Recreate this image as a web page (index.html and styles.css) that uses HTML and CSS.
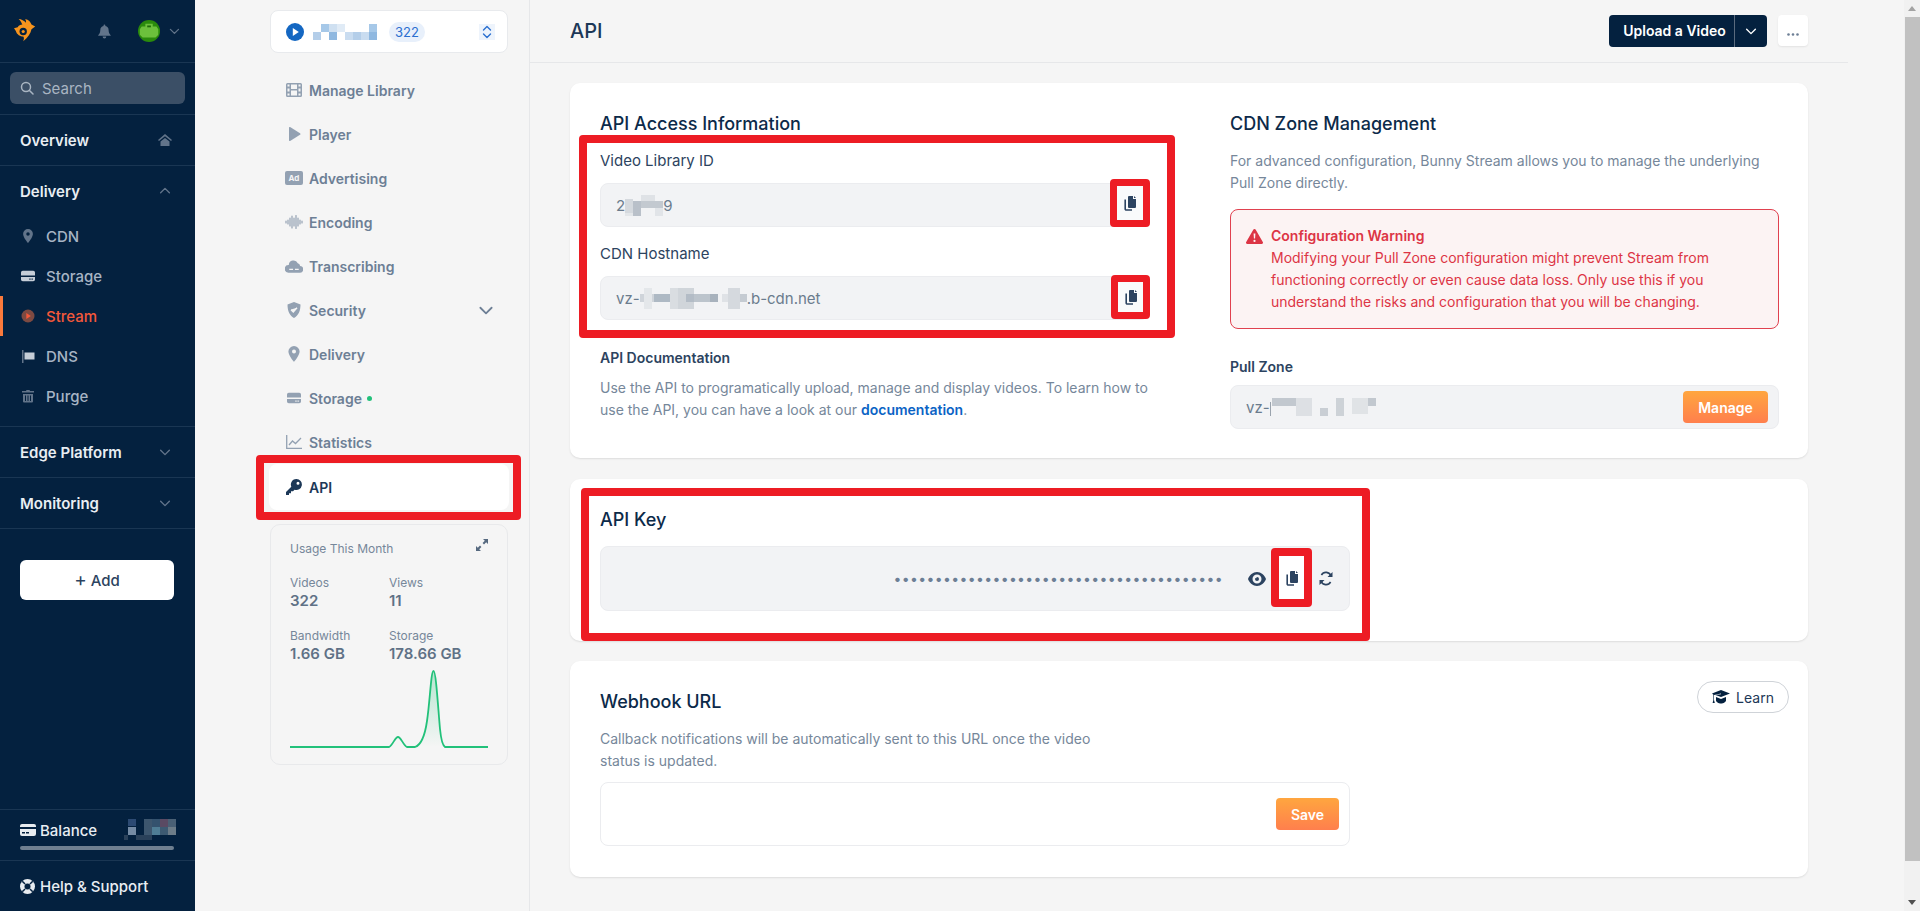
FILE: index.html
```html
<!DOCTYPE html>
<html lang="en">
<head>
    <meta charset="UTF-8">
    <meta name="viewport" content="width=device-width, initial-scale=1.0">
    <title>API</title>
    <link rel="stylesheet" href="styles.css">
</head>
<body>
    <svg class="sprite" aria-hidden="true">
        <symbol id="i-copy" viewBox="0 0 16 16">
            <path d="M7 1h4v3h3v8a1 1 0 0 1-1 1H7a1 1 0 0 1-1-1V2a1 1 0 0 1 1-1zM12 1l2 2h-2z" fill="currentColor"/>
            <path d="M3.2 4.5V14a1 1 0 0 0 1 1H10" fill="none" stroke="currentColor" stroke-width="1.6"/>
        </symbol>
        <symbol id="i-down" viewBox="0 0 16 16">
            <path d="M3 6l5 5 5-5" fill="none" stroke="currentColor" stroke-width="1.6" stroke-linecap="round" stroke-linejoin="round"/>
        </symbol>
        <symbol id="i-up" viewBox="0 0 16 16">
            <path d="M3 10l5-5 5 5" fill="none" stroke="currentColor" stroke-width="1.6" stroke-linecap="round" stroke-linejoin="round"/>
        </symbol>
        <symbol id="i-pin" viewBox="0 0 16 16">
            <path d="M8 0a5.6 5.6 0 0 0-5.6 5.6C2.400 9.500 8 16 8 16s5.600-6.500 5.600-10.400A5.600 5.600 0 0 0 8 0zm0 7.600a2 2 0 1 1 0-4 2 2 0 0 1 0 4z" fill="currentColor"/>
        </symbol>
        <symbol id="i-drive" viewBox="0 0 16 16">
            <path d="M2 2h12a2 2 0 0 1 2 2v3.500H0V4a2 2 0 0 1 2-2zM0 9h16v3a2 2 0 0 1-2 2H2a2 2 0 0 1-2-2zm9.500 1.800v1.400h1.500v-1.400zm2.500 0v1.400h1.500v-1.400z" fill="currentColor" fill-rule="evenodd"/>
        </symbol>
    </svg>

    <div class="app">
        <aside class="sidebar">
            <div class="side-top">
                <svg class="logo" width="24" height="28" viewBox="0 0 24 28">
                    <path d="M9 7C8 4 6 2 5 1c3 0 6 2 8 4 0-2 0-3-1-4 4 1 6 3 7 6l4 2-4 3c-1 5-4 9-9 13 1-2 1-4 0-5-3 0-7-2-8-6L0 11l4-1c1-2 3-3 5-3z" fill="#f7941d"/>
                    <circle cx="10" cy="14.500" r="4" fill="#04213f"/>
                    <circle cx="10" cy="14.500" r="1.700" fill="#f7941d"/>
                </svg>
                <svg class="bell" width="14" height="15" viewBox="0 0 14 15">
                    <path d="M7 0a1 1 0 0 1 1 1v.6A4.500 4.500 0 0 1 11.500 6c0 3.500 1.500 4.500 2.500 6H0c1-1.500 2.500-2.500 2.500-6A4.500 4.500 0 0 1 6 1.600V1a1 1 0 0 1 1-1zM5 13h4a2 2 0 0 1-4 0z" fill="#62748a"/>
                </svg>
                <svg class="avatar" width="24" height="24" viewBox="0 0 24 24">
                    <circle cx="12" cy="12" r="12" fill="#2a8a0c"/>
                    <path d="M8 4h8v3h4l2 3v6l-3 3H5l-3-3v-6l2-3h4z" fill="#6cc03c"/>
                    <rect x="10" y="6" width="4" height="2" fill="#1f6c08"/>
                </svg>
                <svg class="top-chev" width="14" height="14"><use href="#i-down"/></svg>
            </div>

            <div class="search-wrap">
                <div class="search">
                    <svg width="14" height="14" viewBox="0 0 14 14"><circle cx="6" cy="6" r="4.500" fill="none" stroke="currentColor" stroke-width="1.500"/><path d="M9.500 9.500L13 13" stroke="currentColor" stroke-width="1.500" stroke-linecap="round"/></svg>
                    <span>Search</span>
                </div>
            </div>

            <div class="side-head side-single">
                <span>Overview</span>
                <svg width="14" height="14" viewBox="0 0 14 14"><path d="M7 1l7 6-1 1-6-4.800L1 8 0 7zM2.500 8.500L7 5l4.500 3.500V13h-9z" fill="#62748a"/></svg>
            </div>

            <div class="side-group">
                <div class="side-head">
                    <span>Delivery</span>
                    <svg class="chev" width="14" height="14"><use href="#i-up"/></svg>
                </div>
                <a class="side-link"><svg width="14" height="14"><use href="#i-pin"/></svg>CDN</a>
                <a class="side-link"><svg class="light" width="14" height="14"><use href="#i-drive"/></svg>Storage</a>
                <a class="side-link active">
                    <svg width="14" height="14" viewBox="0 0 14 14"><circle cx="7" cy="7" r="6.500" fill="#7d4a42"/><path d="M5.300 4l4.500 3-4.500 3z" fill="#f4583a"/></svg>Stream
                </a>
                <a class="side-link">
                    <svg width="14" height="14" viewBox="0 0 14 14"><rect x="1" y="1" width="1.500" height="13" fill="#62748a"/><rect x="3.500" y="3.500" width="10" height="7" fill="#c6ceD8"/></svg>DNS
                </a>
                <a class="side-link">
                    <svg width="14" height="14" viewBox="0 0 14 14"><path d="M1 2h4l.5-1h3L9 2h4v1.500H1zM2 5h10v7.500a1 1 0 0 1-1 1H3a1 1 0 0 1-1-1zm2 1.500V12h1V6.500zm2.500 0V12h1V6.500zm2.500 0V12h1V6.500z" fill="#62748a" fill-rule="evenodd"/></svg>Purge
                </a>
            </div>

            <div class="side-head side-single">
                <span>Edge Platform</span>
                <svg class="chev" width="14" height="14"><use href="#i-down"/></svg>
            </div>
            <div class="side-head side-single">
                <span>Monitoring</span>
                <svg class="chev" width="14" height="14"><use href="#i-down"/></svg>
            </div>

            <div class="add-wrap">
                <button class="add-btn"><span class="plus">+</span> Add</button>
            </div>

            <div class="side-bottom">
                <div class="balance">
                    <div class="balance-row">
                        <svg width="16" height="14" viewBox="0 0 16 14"><path d="M2 1h12a2 2 0 0 1 2 2v1H0V3a2 2 0 0 1 2-2zM0 6h16v5a2 2 0 0 1-2 2H2a2 2 0 0 1-2-2zm2 3v1.500h3V9zm4 0v1.500h3V9z" fill="#e8ecf0" fill-rule="evenodd"/></svg>
                        <span>Balance</span>
                        <svg class="pix" width="52" height="22" viewBox="0 0 52 22">
                            <rect x="4" y="0" width="8" height="7" fill="#2c4a73"/>
                            <rect x="4" y="8" width="8" height="8" fill="#758ba4"/>
                            <rect x="0" y="16" width="4" height="5" fill="#2a415a"/>
                            <rect x="12" y="16" width="16" height="5" fill="#2a415a"/>
                            <rect x="20" y="0" width="8" height="16" fill="#3d566e"/>
                            <rect x="28" y="0" width="8" height="8" fill="#34526e"/>
                            <rect x="28" y="8" width="8" height="8" fill="#4f7d95"/>
                            <rect x="36" y="0" width="8" height="8" fill="#5a4a63"/>
                            <rect x="36" y="8" width="8" height="8" fill="#3d5a72"/>
                            <rect x="44" y="0" width="8" height="8" fill="#4a6075"/>
                            <rect x="44" y="8" width="8" height="8" fill="#6d7c88"/>
                        </svg>
                    </div>
                    <div class="balance-bar"></div>
                </div>
                <div class="help">
                    <svg width="15" height="15" viewBox="0 0 16 16"><circle cx="8" cy="8" r="8" fill="#e8ecf0"/><circle cx="8" cy="8" r="3.200" fill="#04213f"/><path d="M2.400 2.400l3 3M13.600 2.400l-3 3M2.400 13.600l3-3M13.600 13.600l-3-3" stroke="#04213f" stroke-width="1.600"/></svg>
                    <span>Help &amp; Support</span>
                </div>
            </div>
        </aside>

        <nav class="subnav">
            <div class="selector">
                <svg width="18" height="18" viewBox="0 0 18 18"><circle cx="9" cy="9" r="9" fill="#1467c2"/><path d="M6.800 5l6 4-6 4z" fill="#fff"/></svg>
                <svg class="pix" width="64" height="16" viewBox="0 0 64 16">
                    <rect x="0" y="8" width="8" height="8" fill="#b4cee9"/>
                    <rect x="8" y="0" width="8" height="8" fill="#a6c8e8"/>
                    <rect x="16" y="0" width="8" height="8" fill="#cfe0f1"/>
                    <rect x="16" y="8" width="8" height="8" fill="#8fb8e0"/>
                    <rect x="24" y="0" width="8" height="8" fill="#e0ebf6"/>
                    <rect x="32" y="8" width="8" height="8" fill="#c9dcf0"/>
                    <rect x="40" y="8" width="8" height="8" fill="#b4cee9"/>
                    <rect x="48" y="8" width="8" height="8" fill="#c9dcf0"/>
                    <rect x="56" y="0" width="8" height="8" fill="#a6c8e8"/>
                    <rect x="56" y="8" width="8" height="8" fill="#8fb8e0"/>
                </svg>
                <span class="badge">322</span>
                <span class="updown">
                    <svg width="12" height="14" viewBox="0 0 12 14"><path d="M2.500 5L6 1.500 9.500 5M2.500 9L6 12.500 9.500 9" fill="none" stroke="#2b6fd0" stroke-width="1.400" stroke-linecap="round" stroke-linejoin="round"/></svg>
                </span>
            </div>

            <div class="nav-list">
                <a class="nav-item">
                    <svg width="16" height="14" viewBox="0 0 16 14"><path d="M1.500 0h13A1.500 1.500 0 0 1 16 1.500v11a1.500 1.500 0 0 1-1.500 1.500h-13A1.500 1.500 0 0 1 0 12.500v-11A1.500 1.500 0 0 1 1.500 0zM1.500 1.500v2h2v-2zm0 4v3h2v-3zm0 5v2h2v-2zm11-9v2h2v-2zm0 4v3h2v-3zm0 5v2h2v-2zM5 1.500v4.500h6V1.500zm0 6v5h6v-5z" fill="currentColor" fill-rule="evenodd"/></svg>
                    Manage Library
                </a>
                <a class="nav-item">
                    <svg width="16" height="14" viewBox="0 0 16 14"><path d="M3 1a1 1 0 0 1 1.500-.8l9.500 6a1 1 0 0 1 0 1.600l-9.500 6A1 1 0 0 1 3 13z" fill="currentColor"/></svg>
                    Player
                </a>
                <a class="nav-item">
                    <span class="ad-icon">Ad</span>
                    Advertising
                </a>
                <a class="nav-item">
                    <svg width="18" height="14" viewBox="0 0 18 14"><path d="M1 6v2M3 5v4M5 3v8M7 1v12M9 3v8M11 0.500v13M13 3v8M15 5v4M17 6v2" stroke="currentColor" stroke-width="1.200" stroke-linecap="round"/></svg>
                    Encoding
                </a>
                <a class="nav-item">
                    <svg width="19" height="14" viewBox="0 0 19 14"><path d="M4 6a5 5 0 0 1 9.500-2A3.500 3.500 0 0 1 16 7a3.500 3.500 0 0 1-.500 7h-12A3.500 3.500 0 0 1 4 6zm.500 4v1.200h4V10zm6 0v1.200h4V10z" fill="currentColor" fill-rule="evenodd"/></svg>
                    Transcribing
                </a>
                <a class="nav-item">
                    <svg width="16" height="16" viewBox="0 0 16 16"><path d="M8 0l6.500 2.500C14.500 9 12.500 13.500 8 16 3.500 13.500 1.500 9 1.500 2.500zM5 7.500L7.300 10 11 5.800" fill="currentColor"/><path d="M5 7.800L7.300 10 11 5.800" fill="none" stroke="#f5f5f5" stroke-width="1.400"/></svg>
                    Security
                    <svg class="nav-chev" width="18" height="18"><use href="#i-down"/></svg>
                </a>
                <a class="nav-item">
                    <svg width="16" height="16"><use href="#i-pin"/></svg>
                    Delivery
                </a>
                <a class="nav-item">
                    <svg width="16" height="14"><use href="#i-drive"/></svg>
                    Storage <span class="dot"></span>
                </a>
                <a class="nav-item">
                    <svg width="16" height="14" viewBox="0 0 16 14"><path d="M.7 0v13.300H16" fill="none" stroke="currentColor" stroke-width="1.300"/><path d="M3 10l3.500-4 3 2.500L15 3" fill="none" stroke="currentColor" stroke-width="1.300"/></svg>
                    Statistics
                </a>
                <a class="nav-item current">
                    <svg width="16" height="16" viewBox="0 0 16 16"><path d="M10.500 0A5.500 5.500 0 1 1 8.600 10.700L7 12.300H5v2H3V16H0v-3l5.300-5.300A5.500 5.500 0 0 1 10.500 0zm1.500 2.700a1.500 1.500 0 1 0 0 3 1.500 1.500 0 0 0 0-3z" fill="currentColor" fill-rule="evenodd"/></svg>
                    API
                    <span class="mark mark-nav"></span>
                </a>
            </div>

            <div class="usage">
                <div class="usage-title">
                    <span>Usage This Month</span>
                    <svg width="12" height="12" viewBox="0 0 12 12"><path d="M7 0h5v5l-1.800-1.800L8 5.400 6.600 4 8.800 1.800zM0 7l1.800 1.800L4 6.600 5.400 8 3.200 10.200 5 12H0z" fill="#56697f"/></svg>
                </div>
                <div class="usage-grid">
                    <div><p class="u-label">Videos</p><p class="u-value">322</p></div>
                    <div><p class="u-label">Views</p><p class="u-value">11</p></div>
                    <div><p class="u-label">Bandwidth</p><p class="u-value">1.66 GB</p></div>
                    <div><p class="u-label">Storage</p><p class="u-value">178.66 GB</p></div>
                </div>
                <svg class="usage-chart" width="198" height="82" viewBox="0 0 198 82">
                    <defs>
                        <linearGradient id="spark" x1="0" y1="0" x2="0" y2="1">
                            <stop offset="0" stop-color="#22c17a" stop-opacity=".3"/>
                            <stop offset="1" stop-color="#22c17a" stop-opacity="0"/>
                        </linearGradient>
                    </defs>
                    <path d="M127 80C133 76 136 66 138 50C140 30 141 4 143.500 4C146 4 148 40 150 62C151 72 152 78 155 80Z" fill="url(#spark)"/>
                    <path d="M0 80H99C103 78 105 70 108 70C111 70 113 78 117 80H125C131 78 135 68 137 54C140 34 141 4 143.500 4C146 4 148 40 150 62C151 72 152 78 155 80H198" fill="none" stroke="#22c17a" stroke-width="1.800"/>
                </svg>
            </div>
        </nav>

        <main class="main">
            <header class="page-head">
                <h1>API</h1>
                <div class="head-actions">
                    <div class="upload">
                        <span class="upload-label">Upload a Video</span>
                        <span class="upload-caret"><svg width="14" height="14"><use href="#i-down"/></svg></span>
                    </div>
                    <button class="more-btn">
                        <svg width="12" height="3" viewBox="0 0 12 3"><circle cx="1.500" cy="1.500" r="1.300"/><circle cx="6" cy="1.500" r="1.300"/><circle cx="10.500" cy="1.500" r="1.300"/></svg>
                    </button>
                </div>
            </header>

            <div class="content">
                <section class="card card-access">
                    <div class="col">
                        <h2>API Access Information</h2>
                        <div class="access-fields">
                            <label class="label">Video Library ID</label>
                            <div class="field">
                                <span>2</span>
                                <svg class="pix" width="38" height="21" viewBox="0 0 38 21">
                                    <rect x="0" y="4" width="8" height="14" fill="#d5d9de"/>
                                    <rect x="0" y="18" width="8" height="3" fill="#e3e6e9"/>
                                    <rect x="8" y="6" width="8" height="15" fill="#b9c0c9"/>
                                    <rect x="16" y="0" width="14" height="6" fill="#dfe2e6"/>
                                    <rect x="16" y="6" width="22" height="7" fill="#c3c9d0"/>
                                    <rect x="30" y="13" width="8" height="8" fill="#e1e4e8"/>
                                </svg>
                                <span>9</span>
                                <span class="copy-mark copy-a"><svg width="16" height="18"><use href="#i-copy"/></svg></span>
                            </div>
                            <label class="label label-next">CDN Hostname</label>
                            <div class="field">
                                <span>vz-</span>
                                <svg class="pix" width="107" height="21" viewBox="0 0 107 21">
                                    <rect x="0" y="6" width="30" height="8" fill="#cfd4da"/>
                                    <rect x="4" y="0" width="8" height="21" fill="#e4e7ea"/>
                                    <rect x="14" y="6" width="16" height="8" fill="#aeb9c4"/>
                                    <rect x="30" y="0" width="8" height="21" fill="#d9dde1"/>
                                    <rect x="38" y="0" width="16" height="21" fill="#d0d5da"/>
                                    <rect x="46" y="6" width="8" height="8" fill="#b3bcc6"/>
                                    <rect x="54" y="6" width="16" height="8" fill="#bcc4cc"/>
                                    <rect x="70" y="6" width="8" height="8" fill="#a8b2bd"/>
                                    <rect x="82" y="6" width="18" height="8" fill="#dfe2e6"/>
                                    <rect x="88" y="0" width="12" height="21" fill="#d5d9de"/>
                                    <rect x="100" y="6" width="7" height="8" fill="#c5cbd2"/>
                                </svg>
                                <span>.b-cdn.net</span>
                                <span class="copy-mark copy-b"><svg width="16" height="18"><use href="#i-copy"/></svg></span>
                            </div>
                            <span class="mark mark-access"></span>
                        </div>
                        <h3 class="doc-title">API Documentation</h3>
                        <p class="text doc-text">Use the API to programatically upload, manage and display videos. To learn how to use the API, you can have a look at our <a class="doc-link">documentation</a>.</p>
                    </div>
                    <div class="col">
                        <h2>CDN Zone Management</h2>
                        <p class="text zone-text">For advanced configuration, Bunny Stream allows you to manage the underlying Pull Zone directly.</p>
                        <div class="warning">
                            <svg width="17" height="15" viewBox="0 0 17 15"><path d="M8.500 0a1.300 1.300 0 0 1 1.100.6l7.200 12.400a1.300 1.300 0 0 1-1.100 2H1.300a1.300 1.300 0 0 1-1.100-2L7.400.6A1.300 1.300 0 0 1 8.500 0zM7.600 4.500l.3 5h1.200l.3-5zm.9 6.300a1.100 1.100 0 1 0 0 2.200 1.100 1.100 0 0 0 0-2.200z" fill="#dc3545" fill-rule="evenodd"/></svg>
                            <div>
                                <strong>Configuration Warning</strong>
                                <p>Modifying your Pull Zone configuration might prevent Stream from functioning correctly or even cause data loss. Only use this if you understand the risks and configuration that you will be changing.</p>
                            </div>
                        </div>
                        <h3 class="pull-title">Pull Zone</h3>
                        <div class="field field-pull">
                            <span>vz-</span>
                            <svg class="pix" width="106" height="18" viewBox="0 0 106 18">
                                <rect x="0" y="4" width="1" height="14" fill="#9aa3ad"/>
                                <rect x="2" y="0" width="24" height="8" fill="#c2c8cf"/>
                                <rect x="26" y="0" width="16" height="18" fill="#dde0e4"/>
                                <rect x="50" y="10" width="8" height="8" fill="#c9ced4"/>
                                <rect x="66" y="0" width="8" height="18" fill="#cdd2d7"/>
                                <rect x="82" y="0" width="16" height="16" fill="#e0e3e6"/>
                                <rect x="98" y="0" width="8" height="8" fill="#c2c8cf"/>
                            </svg>
                            <button class="orange-btn manage-btn">Manage</button>
                        </div>
                    </div>
                </section>

                <section class="card card-key">
                    <h2>API Key</h2>
                    <div class="field field-key">
                        <span class="key-dots">••••••••••••••••••••••••••••••••••••••••</span>
                        <svg class="key-icon eye" width="18" height="14" viewBox="0 0 18 14"><path d="M9 0c4 0 7.500 3 9 7-1.500 4-5 7-9 7s-7.500-3-9-7c1.500-4 5-7 9-7zm0 2.500a4.500 4.500 0 1 0 0 9 4.500 4.500 0 0 0 0-9zM9 5a2 2 0 1 1-2 2c0-.3.100-.6.200-.9.300.2.700.3 1 .1.400-.2.500-.6.400-1.100.1-.1.300-.1.400-.1z" fill="currentColor" fill-rule="evenodd"/></svg>
                        <span class="copy-mark copy-c"><svg width="16" height="18"><use href="#i-copy"/></svg></span>
                        <svg class="key-icon refresh" width="14" height="15" viewBox="0 0 14 15"><path d="M12 5A5.300 5.300 0 0 0 2.400 4M2 10a5.300 5.300 0 0 0 9.600 1" fill="none" stroke="currentColor" stroke-width="1.600"/><path d="M13.500 1v5h-5zM.5 14V9h5z" fill="currentColor"/></svg>
                    </div>
                    <span class="mark mark-key"></span>
                </section>

                <section class="card card-hook">
                    <button class="learn-btn">
                        <svg width="18" height="14" viewBox="0 0 18 14"><path d="M9 0l9 3.500L9 7 3.500 5 9 4.200 9 3.500 2 5v5l.8 3H.6l.8-3V4.700L0 3.500zM4 7l5 2 5-2v3.500c0 1.500-2.500 3-5 3s-5-1.500-5-3z" fill="#04213f"/></svg>
                        Learn
                    </button>
                    <h2>Webhook URL</h2>
                    <p class="text hook-text">Callback notifications will be automatically sent to this URL once the video status is updated.</p>
                    <div class="hook-input">
                        <button class="orange-btn save-btn">Save</button>
                    </div>
                </section>
            </div>
        </main>

        <div class="scroll-gutter"></div>
        <div class="scrollbar">
            <span class="arrow-up"></span>
            <span class="thumb"></span>
            <span class="arrow-down"></span>
        </div>
    </div>
</body>
</html>
```

FILE: styles.css
```css
* {
    box-sizing: border-box;
}
html, body {
    height: 100%;
}
body {
    margin: 0;
    font-family: Inter, "Liberation Sans", sans-serif;
    font-size: 14px;
    color: #6b7c8d;
    background-color: #f5f5f5;
    overflow: hidden;
}
h1, h2, h3, p {
    margin: 0;
}
button {
    font-family: inherit;
    border: none;
    cursor: pointer;
}
.sprite {
    display: none;
}
.app {
    display: flex;
    height: 911px;
}
.pix {
    flex: none;
}

/* left dark sidebar */
.sidebar {
    width: 195px;
    flex: none;
    display: flex;
    flex-direction: column;
    background-color: #04213f;
    color: #a7b4c4;
}
.side-top {
    height: 63px;
    flex: none;
    display: flex;
    align-items: center;
    padding: 0 14px;
    border-bottom: 1px solid #1a3653;
}
.bell {
    margin-left: 62px;
}
.avatar {
    margin-left: 27px;
}
.top-chev {
    margin-left: 8px;
    color: #62748a;
}
.search-wrap {
    height: 52px;
    flex: none;
    padding: 9px 10px;
    border-bottom: 1px solid #1a3653;
}
.search {
    height: 32px;
    display: flex;
    align-items: center;
    gap: 8px;
    padding: 0 10px;
    background-color: #3b4f66;
    border-radius: 6px;
    color: #a9b5c2;
    font-size: 15px;
}
.side-head {
    display: flex;
    align-items: center;
    justify-content: space-between;
    height: 51px;
    flex: none;
    padding: 0 23px 0 20px;
    color: #e9eef3;
    font-size: 15px;
    font-weight: 600;
}
.side-single {
    border-bottom: 1px solid #1a3653;
}
.chev {
    color: #62748a;
}
.side-group {
    height: 261px;
    flex: none;
    border-bottom: 1px solid #1a3653;
}
.side-group .side-head {
    height: 50px;
}
.side-link {
    display: flex;
    align-items: center;
    gap: 11px;
    height: 40px;
    padding-left: 21px;
    color: #a7b4c4;
    font-size: 15px;
    font-weight: 500;
}
.side-link svg {
    color: #62748a;
}
.side-link svg.light {
    color: #c6ced8;
}
.side-link.active {
    color: #f4583a;
    box-shadow: inset 3px 0 0 #fb7a3c;
}
.add-wrap {
    padding: 31px 21px 0 20px;
}
.add-btn {
    width: 100%;
    height: 40px;
    background-color: #fff;
    border-radius: 6px;
    color: #2c4360;
    font-size: 15px;
    font-weight: 500;
}
.plus {
    font-size: 19px;
    font-weight: 400;
    line-height: 1;
}
.side-bottom {
    margin-top: auto;
    border-top: 1px solid #1a3653;
}
.balance {
    height: 51px;
    padding: 10px 21px 0 20px;
    border-bottom: 1px solid #1a3653;
}
.balance-row {
    display: flex;
    align-items: center;
    height: 20px;
    gap: 4px;
    color: #e9eef3;
    font-size: 15px;
    font-weight: 500;
}
.balance-row .pix {
    margin-left: auto;
    margin-right: -2px;
}
.balance-bar {
    height: 4px;
    margin-top: 6px;
    background-color: #6f7f90;
    border-radius: 2px;
}
.help {
    height: 50px;
    display: flex;
    align-items: center;
    gap: 5px;
    padding-left: 20px;
    color: #e9eef3;
    font-size: 15px;
    font-weight: 500;
}

/* second column */
.subnav {
    width: 335px;
    flex: none;
    padding: 10px 21px 0 75px;
    border-right: 1px solid #e6e7e9;
}
.selector {
    height: 43px;
    display: flex;
    align-items: center;
    padding: 0 10px 0 15px;
    background-color: #fff;
    border: 1px solid #e8eaed;
    border-radius: 8px;
}
.selector .pix {
    margin-left: 9px;
}
.badge {
    margin-left: 12px;
    padding: 0 6px;
    height: 20px;
    line-height: 20px;
    font-size: 13px;
    color: #2b6fd0;
    background-color: #e8f0fb;
    border-radius: 10px;
}
.updown {
    margin-left: auto;
    margin-right: 2px;
    width: 16px;
    height: 16px;
    display: flex;
    align-items: center;
    justify-content: center;
    background-color: #eef4fc;
}
.nav-list {
    margin-top: 15px;
}
.nav-item {
    position: relative;
    display: flex;
    align-items: center;
    gap: 6px;
    height: 44px;
    padding-left: 15px;
    color: #6d7f95;
    font-weight: 600;
}
.nav-item > svg:first-child, .ad-icon {
    width: 18px;
    flex: none;
    color: #93a1b2;
}
.ad-icon {
    height: 14px;
    line-height: 14px;
    text-align: center;
    font-size: 8px;
    font-weight: 700;
    color: #f5f5f5;
    background-color: #93a1b2;
    border-radius: 2px;
}
.nav-chev {
    margin-left: auto;
    margin-right: 13px;
    color: #6d7f95;
}
.dot {
    width: 5px;
    height: 5px;
    margin-left: -1px;
    border-radius: 50%;
    background-color: #22c17a;
}
.nav-item.current {
    height: 46px;
    margin: 0 -1px;
    padding-left: 16px;
    color: #1c3857;
    background-color: #fff;
    border-radius: 8px;
}
.nav-item.current > svg:first-child {
    color: #1c3857;
}

/* red annotation frames */
.mark {
    position: absolute;
    border: 8px solid #ed1c24;
    border-radius: 4px;
    pointer-events: none;
}
.mark-nav {
    inset: -9px -12px -10px -13px;
}
.mark-access {
    inset: -16px -26px -18px -21px;
}
.mark-key {
    left: 11px;
    top: 9px;
    bottom: 0;
    width: 789px;
}
.copy-mark {
    position: absolute;
    display: flex;
    align-items: center;
    justify-content: center;
    background-color: #f9fafb;
    border: 7px solid #ed1c24;
    border-radius: 4px;
    color: #2c4360;
}
.copy-a {
    top: -5px;
    bottom: -1px;
    right: -2px;
    width: 40px;
}
.copy-b {
    top: -2px;
    bottom: 0;
    right: -2px;
    width: 39px;
}
.copy-c {
    top: 1px;
    bottom: 3px;
    right: 37px;
    width: 41px;
    background-color: #fff;
    border-width: 8px;
}

/* usage card */
.usage {
    height: 241px;
    margin-top: 14px;
    padding: 16px 19px 0;
    border: 1px solid #e8e9eb;
    border-radius: 10px;
    font-size: 12px;
    color: #76879a;
}
.usage-title {
    display: flex;
    justify-content: space-between;
    align-items: flex-start;
    height: 20px;
}
.usage-title svg {
    margin-top: -2px;
}
.usage-grid {
    display: grid;
    grid-template-columns: 99px 1fr;
    row-gap: 17px;
    margin-top: 14px;
}
.u-label {
    line-height: 16px;
}
.u-value {
    font-size: 15px;
    font-weight: 600;
    line-height: 20px;
    color: #5f7186;
}
.usage-chart {
    display: block;
    margin-top: 3px;
}

/* main column */
.main {
    width: 1318px;
    flex: none;
}
.page-head {
    height: 63px;
    display: flex;
    align-items: center;
    justify-content: space-between;
    padding: 0 40px;
    border-bottom: 1px solid #e6e7e9;
}
.page-head h1 {
    font-size: 20px;
    font-weight: 500;
    color: #1c3857;
}
.head-actions {
    display: flex;
    gap: 11px;
}
.upload {
    display: flex;
    height: 32px;
    background-color: #04213f;
    border-radius: 4px;
    color: #fff;
    font-weight: 600;
}
.upload-label {
    width: 126px;
    padding-left: 6px;
    line-height: 32px;
    text-align: center;
    border-right: 1px solid #5a6b7e;
}
.upload-caret {
    width: 32px;
    display: flex;
    align-items: center;
    justify-content: center;
}
.more-btn {
    width: 30px;
    height: 31px;
    background-color: #fff;
    border-radius: 4px;
    box-shadow: 0 1px 2px rgba(0, 0, 0, 0.08);
    fill: #6d7f95;
}
.content {
    display: flex;
    flex-direction: column;
    gap: 20px;
    padding: 20px 40px 0;
}
.card {
    position: relative;
    background-color: #fff;
    border-radius: 10px;
    padding: 28px 30px 30px;
    box-shadow: 0 1px 2px rgba(0, 0, 0, 0.1);
}
.card-access {
    display: grid;
    grid-template-columns: 549px 549px;
    column-gap: 81px;
    height: 375px;
    margin-bottom: 1px;
}
.card h2 {
    font-size: 18px;
    font-weight: 500;
    line-height: 26px;
    color: #0c2a49;
}
.access-fields {
    position: relative;
    margin-top: 14px;
}
.label {
    display: block;
    font-size: 15px;
    line-height: 20px;
    color: #2c4360;
}
.label-next {
    margin-top: 17px;
}
.field {
    position: relative;
    display: flex;
    align-items: center;
    height: 44px;
    margin-top: 12px;
    padding: 0 15px;
    background-color: #f2f3f5;
    border: 1px solid #ebecef;
    border-radius: 8px;
    color: #6b7c8d;
    font-size: 15px;
}
.doc-title, .pull-title {
    font-size: 14px;
    font-weight: 600;
    line-height: 20px;
    color: #2c4360;
}
.doc-title {
    margin-top: 28px;
}
.text {
    line-height: 22px;
    color: #76879a;
}
.doc-text {
    margin-top: 9px;
}
.doc-link {
    color: #0b63c5;
    font-weight: 600;
}
.zone-text {
    margin-top: 13px;
}
.warning {
    display: flex;
    gap: 8px;
    margin-top: 15px;
    padding: 15px;
    line-height: 22px;
    color: #dc3545;
    background-color: #fcf3f3;
    border: 1px solid #e0414f;
    border-radius: 8px;
}
.warning > svg {
    flex: none;
    margin-top: 4px;
}
.warning strong {
    display: block;
    font-weight: 600;
}
.pull-title {
    margin-top: 28px;
}
.field-pull {
    margin-top: 8px;
}
.orange-btn {
    height: 32px;
    background: linear-gradient(#ffa63f, #ff7f4d);
    border-radius: 4px;
    color: #fff;
    font-size: 14px;
    font-weight: 600;
}
.manage-btn {
    width: 85px;
    margin-left: auto;
    margin-right: -5px;
}

/* api key */
.card-key {
    height: 162px;
}
.field-key {
    width: 750px;
    height: 65px;
    margin-top: 13px;
    padding: 0;
}
.key-dots {
    position: absolute;
    right: 126px;
    color: #6d7f95;
    font-size: 14px;
    letter-spacing: 0.360px;
}
.key-icon {
    position: absolute;
    color: #2c4360;
}
.eye {
    right: 83px;
}
.refresh {
    right: 16px;
}

/* webhook */
.card-hook {
    height: 216px;
}
.learn-btn {
    position: absolute;
    top: 20px;
    right: 19px;
    width: 92px;
    height: 32px;
    display: flex;
    align-items: center;
    justify-content: center;
    gap: 6px;
    background-color: #fff;
    border: 1px solid #cfd3d8;
    border-radius: 16px;
    color: #1c3857;
    font-size: 14px;
}
.hook-text {
    max-width: 500px;
    margin-top: 13px;
}
.hook-input {
    display: flex;
    align-items: center;
    justify-content: flex-end;
    width: 750px;
    height: 64px;
    margin-top: 10px;
    padding-right: 10px;
    border: 1px solid #ebecef;
    border-radius: 8px;
}
.save-btn {
    width: 63px;
}

/* fake browser scrollbar */
.scroll-gutter {
    width: 56px;
    flex: none;
}
.scrollbar {
    width: 16px;
    flex: none;
    position: relative;
    background-color: #f1f1f1;
}
.thumb {
    position: absolute;
    top: 17px;
    left: 1px;
    right: 0;
    height: 844px;
    background-color: #c1c1c1;
}
.arrow-up, .arrow-down {
    position: absolute;
    left: 4px;
    border-left: 4px solid transparent;
    border-right: 4px solid transparent;
}
.arrow-up {
    top: 6px;
    border-bottom: 5px solid #a3a3a3;
}
.arrow-down {
    bottom: 6px;
    border-top: 5px solid #505050;
}
```
